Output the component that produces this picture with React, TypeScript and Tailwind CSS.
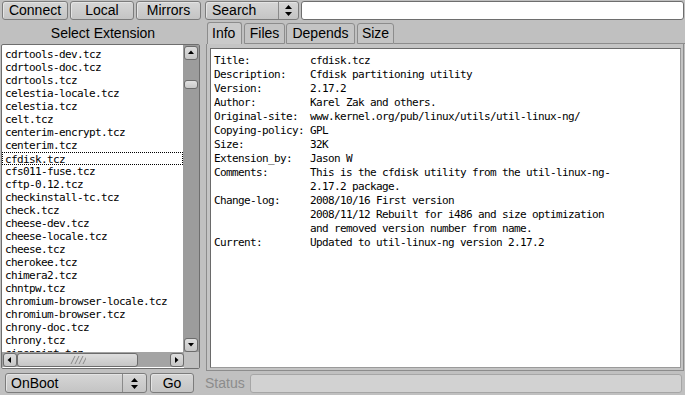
import React from "react";

const items = [
  "cdrtools-dev.tcz",
  "cdrtools-doc.tcz",
  "cdrtools.tcz",
  "celestia-locale.tcz",
  "celestia.tcz",
  "celt.tcz",
  "centerim-encrypt.tcz",
  "centerim.tcz",
  "cfdisk.tcz",
  "cfs011-fuse.tcz",
  "cftp-0.12.tcz",
  "checkinstall-tc.tcz",
  "check.tcz",
  "cheese-dev.tcz",
  "cheese-locale.tcz",
  "cheese.tcz",
  "cherokee.tcz",
  "chimera2.tcz",
  "chntpw.tcz",
  "chromium-browser-locale.tcz",
  "chromium-browser.tcz",
  "chrony-doc.tcz",
  "chrony.tcz",
  "cinepaint.tcz",
];

const info = [
  ["Title:", "cfdisk.tcz"],
  ["Description:", "Cfdisk partitioning utility"],
  ["Version:", "2.17.2"],
  ["Author:", "Karel Zak and others."],
  ["Original-site:", "www.kernel.org/pub/linux/utils/util-linux-ng/"],
  ["Copying-policy:", "GPL"],
  ["Size:", "32K"],
  ["Extension_by:", "Jason W"],
  ["Comments:", "This is the cfdisk utility from the util-linux-ng-"],
  ["", "2.17.2 package."],
  ["Change-log:", "2008/10/16 First version"],
  ["", "2008/11/12 Rebuilt for i486 and size optimization"],
  ["", "and removed version number from name."],
  ["Current:", "Updated to util-linux-ng version 2.17.2"],
];

const mono = "font-['DejaVu_Sans_Mono',monospace] text-[11px] tracking-[-0.62px]";

function Btn({ label, w }: { label: string; w: string }) {
  return (
    <div
      className={`${w} flex h-[19px] items-center justify-center rounded-[3px] border border-[#7c7c7c] bg-gradient-to-b from-[#d6d6d6] to-[#c4c4c4] shadow-[inset_1px_1px_0_#e4e4e4]`}
    >
      {label}
    </div>
  );
}

function UpDown() {
  return (
    <svg width="7" height="11" viewBox="0 0 7 11">
      <path d="M3.5 0 L7 4 L0 4 Z M0 7 L7 7 L3.5 11 Z" fill="#000" />
    </svg>
  );
}

function Choice({ label, w, pad, aw }: { label: string; w: string; pad: string; aw: string }) {
  return (
    <div
      className={`${w} flex h-full items-stretch rounded-[3px] border border-[#7c7c7c] bg-gradient-to-b from-[#d6d6d6] to-[#c4c4c4] shadow-[inset_1px_1px_0_#e4e4e4]`}
    >
      <div className={`flex flex-1 items-center ${pad}`}>{label}</div>
      <div className={`flex ${aw} items-center justify-center border-l border-[#8a8a8a]`}>
        <UpDown />
      </div>
    </div>
  );
}

function Arrow({ dir }: { dir: "up" | "down" | "left" | "right" }) {
  const d = {
    up: "M1 5 L4 1.5 L7 5 Z",
    down: "M1 2 L7 2 L4 5.5 Z",
    left: "M5 1 L1.5 4 L5 7 Z",
    right: "M2 1 L5.5 4 L2 7 Z",
  }[dir];
  return (
    <div className="flex h-[14px] w-[14px] items-center justify-center rounded-[3px] border border-[#6c6c6c] bg-gradient-to-b from-[#dedede] to-[#c6c6c6]">
      <svg width="8" height="8" viewBox="0 0 8 8">
        <path d={d} fill="#000" />
      </svg>
    </div>
  );
}

export default function App() {
  return (
    <div className="flex h-[395px] w-[685px] overflow-hidden bg-[#c0c0c0] font-['Liberation_Sans',sans-serif] text-[14px] text-black">
      {/* left column */}
      <div className="flex w-[205px] flex-col">
        <div className="flex h-[21px] gap-[2px] pl-[2px] pt-[1px]">
          <Btn label="Connect" w="w-[66px]" />
          <Btn label="Local" w="w-[64px]" />
          <Btn label="Mirrors" w="w-[65px]" />
        </div>
        <div className="flex h-[23px] justify-center pl-[1px] pt-[2px]">Select Extension</div>

        <div className="ml-[1px] flex h-[325px] w-[199px] flex-col rounded-[2px] border border-[#6e6e6e] bg-white">
          <div className="flex h-[307px]">
            <div className={`flex w-[181px] flex-col overflow-hidden pt-[3px] ${mono}`}>
              {items.map((it) => (
                <div
                  key={it}
                  className={`h-[13px] shrink-0 whitespace-pre pl-[2px] leading-[13px] ${
                    it === "cfdisk.tcz" ? "ml-[0px] border border-dotted border-black pl-[1px] leading-[11px]" : "ml-[1px]"
                  }`}
                >
                  {it}
                </div>
              ))}
            </div>
            <div className="flex w-[16px] flex-col items-center bg-[#9c9c9c] pr-[1px] pt-[1px]">
              <Arrow dir="up" />
              <div className="mt-[20px] h-[9px] w-[14px] rounded-[3px] border border-[#6c6c6c] bg-gradient-to-b from-[#e2e2e2] to-[#c8c8c8]" />
              <div className="flex-1" />
              <Arrow dir="down" />
            </div>
          </div>
          <div className="flex h-[16px] items-start">
            <div className="flex h-[15px] w-[182px] items-center bg-[#a4a4a4] pl-[1px]">
              <Arrow dir="left" />
              <div className="flex h-[14px] w-[121px] items-center justify-center rounded-[3px] border border-[#6c6c6c] bg-gradient-to-b from-[#dedede] to-[#c6c6c6]">
                <svg width="16" height="8" viewBox="0 0 16 8">
                  <path d="M1 8 L5 0 M5 8 L9 0 M9 8 L13 0 M13 8 L17 0" stroke="#8a8a8a" strokeWidth="1" />
                </svg>
              </div>
              <div className="flex-1" />
              <Arrow dir="right" />
            </div>
            <div className="h-full flex-1 bg-[#c0c0c0]" />
          </div>
        </div>

        <div className="mt-[4px] flex h-[20px] gap-[3px] pl-[5px]">
          <Choice label="OnBoot" w="w-[142px]" pad="pl-[5px]" aw="w-[24px]" />
          <Btn label="Go" w="w-[44px] !h-[20px]" />
        </div>
      </div>

      {/* right column */}
      <div className="flex flex-1 flex-col">
        <div className="flex h-[21px] gap-[2px] pt-[1px]">
          <div className="h-[19px]">
            <Choice label="Search" w="w-[94px]" pad="pl-[6px]" aw="w-[20px]" />
          </div>
          <div className="mr-[1px] h-[19px] flex-1 rounded-[3px] border border-[#6e6e6e] bg-white" />
        </div>

        <div className="flex h-[23px] items-end pl-[2px] pt-[1px]">
          <div className="flex h-[22px] w-[35px] items-center rounded-t-[3px] border border-b-0 border-[#8c8c8c] bg-[#cacaca] pl-[4px]">
            Info
          </div>
          <div className="ml-[2px] flex h-[21px] w-[41px] items-center justify-center rounded-t-[3px] border border-[#8c8c8c] bg-[#c4c4c4]">
            Files
          </div>
          <div className="ml-[1px] flex h-[21px] w-[69px] items-center justify-center rounded-t-[3px] border border-[#8c8c8c] bg-[#c4c4c4]">
            Depends
          </div>
          <div className="ml-[2px] flex h-[21px] w-[37px] items-center justify-center rounded-t-[3px] border border-[#8c8c8c] bg-[#c4c4c4]">
            Size
          </div>
          <div className="h-[1px] flex-1 bg-[#8c8c8c]" />
        </div>

        <div className="ml-[1px] mr-[1px] flex h-[327px] border border-t-0 border-[#8c8c8c] bg-[#c4c4c4] pb-[2px] pl-[3px] pr-[2px] pt-[4px]">
          <div className="flex-1 border border-[#6a6a6a] border-b-[#9a9a9a] border-r-[#9a9a9a] bg-white pl-[3px] pt-[5px]">
            <div className={mono}>
              {info.map(([k, v], i) => (
                <div key={i} className="flex h-[14px] leading-[14px]">
                  <div className="w-[96px] shrink-0 whitespace-pre">{k}</div>
                  <div className="whitespace-pre">{v}</div>
                </div>
              ))}
            </div>
          </div>
        </div>

        <div className="mt-[3px] flex h-[19px] gap-[5px]">
          <div className="flex items-center text-[#8c8c8c]">Status</div>
          <div className="mr-[3px] flex-1 rounded-[3px] border border-[#a6a6a6] bg-[#d2d2d2]" />
        </div>
      </div>
    </div>
  );
}
